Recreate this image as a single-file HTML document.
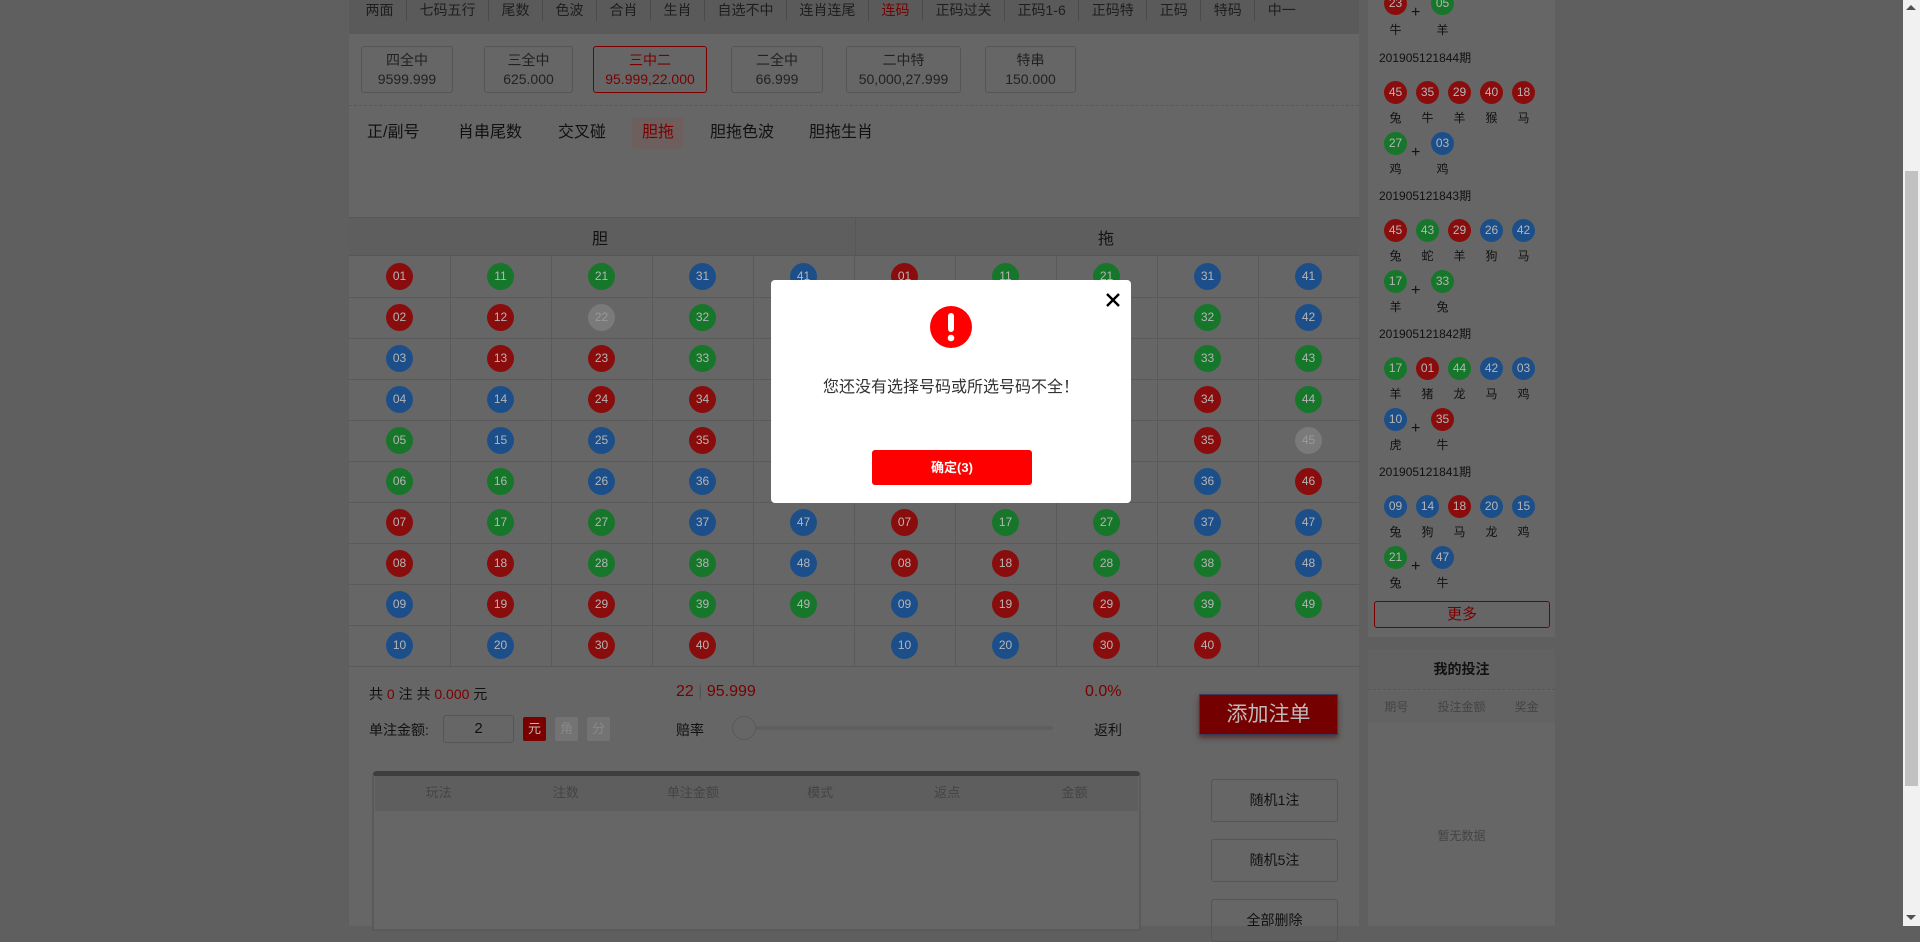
<!DOCTYPE html>
<html><head><meta charset="utf-8">
<style>
*{margin:0;padding:0;box-sizing:border-box}
body{width:1920px;height:926px;overflow:hidden;background:#5f5f5f;font-family:"Liberation Sans","Noto Sans CJK SC",sans-serif;color:#111;position:relative}
.a{position:absolute}
#main{left:349px;top:0;width:1010px;height:926px;background:#666}
#tabs{left:349px;top:0;width:1010px;height:34px;background:#5a5a5a;display:flex;padding-left:4px}
#tabs span{font-size:14px;line-height:22px;margin-top:-1px;padding:0 12.5px;border-right:1px solid #4a4a4a;color:#1e1e1e;height:22px}
.pb{border:1px solid #555;border-radius:3px;text-align:center;font-size:14px;line-height:19px;padding-top:4px;color:#222;top:46px;height:47px}
.sub{top:122px;font-size:16px;line-height:22px;color:#111}
.ball{position:absolute;width:27px;height:27px;border-radius:50%;color:#b5b5b5;font-size:12px;line-height:27px;text-align:center}
.r{background:#8a0d0d}.g{background:#16762a}.b{background:#1c4f8a}.x{background:#7a7a7a;color:#999}
.sb{position:absolute;width:23px;height:23px;border-radius:50%;color:#b5b5b5;font-size:12px;line-height:23px;text-align:center}
.z{position:absolute;font-size:12px;width:23px;text-align:center;color:#111}
.pl{position:absolute;font-size:16px;color:#111}
.tt{position:absolute;font-size:12px;color:#111;left:11px}
</style></head><body>
<div class="a" id="main"></div>
<div class="a" id="tabs"><span>两面</span><span>七码五行</span><span>尾数</span><span>色波</span><span>合肖</span><span>生肖</span><span>自选不中</span><span>连肖连尾</span><span style="color:#7a0000">连码</span><span>正码过关</span><span>正码1-6</span><span>正码特</span><span>正码</span><span>特码</span><span style="border:none">中一</span></div>

<div class="a pb" style="left:361px;width:92px">四全中<br>9599.999</div>
<div class="a pb" style="left:484px;width:89px">三全中<br>625.000</div>
<div class="a pb" style="left:593px;width:114px;border-color:#7a0000;color:#7a0000">三中二<br>95.999,22.000</div>
<div class="a pb" style="left:731px;width:92px">二全中<br>66.999</div>
<div class="a pb" style="left:846px;width:115px">二中特<br>50,000,27.999</div>
<div class="a pb" style="left:985px;width:91px">特串<br>150.000</div>
<div class="a" style="left:349px;top:105px;width:1010px;border-top:1px dashed #595959"></div>

<div class="a sub" style="left:367px">正/副号</div>
<div class="a sub" style="left:458px">肖串尾数</div>
<div class="a sub" style="left:558px">交叉碰</div>
<div class="a" style="left:632px;top:117px;width:51px;height:32px;background:#6e5f5f;border-radius:4px"></div>
<div class="a sub" style="left:642px;color:#7a0000">胆拖</div>
<div class="a sub" style="left:710px">胆拖色波</div>
<div class="a sub" style="left:809px">胆拖生肖</div>

<div class="a" style="left:349px;top:217px;width:1010px;height:39px;background:#5e5e5e;border-top:1px solid #575757;border-bottom:1px solid #575757"></div>
<div class="a" style="left:855px;top:217px;height:39px;border-left:1px solid #575757"></div>
<div class="a" style="left:592px;top:225px;font-size:16px">胆</div>
<div class="a" style="left:1098px;top:225px;font-size:16px">拖</div>

<svg class="a" style="left:349px;top:256px" width="1010" height="411">
<g stroke="#5a5a5a" stroke-width="1">
<line x1="0" y1="41.5" x2="1010" y2="41.5"/><line x1="0" y1="82.5" x2="1010" y2="82.5"/><line x1="0" y1="123.5" x2="1010" y2="123.5"/><line x1="0" y1="164.5" x2="1010" y2="164.5"/><line x1="0" y1="205.5" x2="1010" y2="205.5"/><line x1="0" y1="246.5" x2="1010" y2="246.5"/><line x1="0" y1="287.5" x2="1010" y2="287.5"/><line x1="0" y1="328.5" x2="1010" y2="328.5"/><line x1="0" y1="369.5" x2="1010" y2="369.5"/><line x1="0" y1="410.5" x2="1010" y2="410.5"/>
<line x1="101.5" y1="0" x2="101.5" y2="410"/><line x1="202.5" y1="0" x2="202.5" y2="410"/><line x1="303.5" y1="0" x2="303.5" y2="410"/><line x1="404.5" y1="0" x2="404.5" y2="410"/><line x1="505.5" y1="0" x2="505.5" y2="410"/><line x1="606.5" y1="0" x2="606.5" y2="410"/><line x1="707.5" y1="0" x2="707.5" y2="410"/><line x1="808.5" y1="0" x2="808.5" y2="410"/><line x1="909.5" y1="0" x2="909.5" y2="410"/>
</g></svg>

<div class="a" style="left:349px;top:256px;width:1010px;height:411px">
<div class="ball r" style="left:37px;top:7px">01</div><div class="ball g" style="left:138px;top:7px">11</div><div class="ball g" style="left:239px;top:7px">21</div><div class="ball b" style="left:340px;top:7px">31</div><div class="ball b" style="left:441px;top:7px">41</div><div class="ball r" style="left:542px;top:7px">01</div><div class="ball g" style="left:643px;top:7px">11</div><div class="ball g" style="left:744px;top:7px">21</div><div class="ball b" style="left:845px;top:7px">31</div><div class="ball b" style="left:946px;top:7px">41</div>
<div class="ball r" style="left:37px;top:48px">02</div><div class="ball r" style="left:138px;top:48px">12</div><div class="ball x" style="left:239px;top:48px">22</div><div class="ball g" style="left:340px;top:48px">32</div><div class="ball b" style="left:441px;top:48px">42</div><div class="ball r" style="left:542px;top:48px">02</div><div class="ball r" style="left:643px;top:48px">12</div><div class="ball g" style="left:744px;top:48px">22</div><div class="ball g" style="left:845px;top:48px">32</div><div class="ball b" style="left:946px;top:48px">42</div>
<div class="ball b" style="left:37px;top:89px">03</div><div class="ball r" style="left:138px;top:89px">13</div><div class="ball r" style="left:239px;top:89px">23</div><div class="ball g" style="left:340px;top:89px">33</div><div class="ball g" style="left:441px;top:89px">43</div><div class="ball b" style="left:542px;top:89px">03</div><div class="ball r" style="left:643px;top:89px">13</div><div class="ball r" style="left:744px;top:89px">23</div><div class="ball g" style="left:845px;top:89px">33</div><div class="ball g" style="left:946px;top:89px">43</div>
<div class="ball b" style="left:37px;top:130px">04</div><div class="ball b" style="left:138px;top:130px">14</div><div class="ball r" style="left:239px;top:130px">24</div><div class="ball r" style="left:340px;top:130px">34</div><div class="ball g" style="left:441px;top:130px">44</div><div class="ball b" style="left:542px;top:130px">04</div><div class="ball b" style="left:643px;top:130px">14</div><div class="ball r" style="left:744px;top:130px">24</div><div class="ball r" style="left:845px;top:130px">34</div><div class="ball g" style="left:946px;top:130px">44</div>
<div class="ball g" style="left:37px;top:171px">05</div><div class="ball b" style="left:138px;top:171px">15</div><div class="ball b" style="left:239px;top:171px">25</div><div class="ball r" style="left:340px;top:171px">35</div><div class="ball r" style="left:441px;top:171px">45</div><div class="ball g" style="left:542px;top:171px">05</div><div class="ball b" style="left:643px;top:171px">15</div><div class="ball b" style="left:744px;top:171px">25</div><div class="ball r" style="left:845px;top:171px">35</div><div class="ball x" style="left:946px;top:171px">45</div>
<div class="ball g" style="left:37px;top:212px">06</div><div class="ball g" style="left:138px;top:212px">16</div><div class="ball b" style="left:239px;top:212px">26</div><div class="ball b" style="left:340px;top:212px">36</div><div class="ball r" style="left:441px;top:212px">46</div><div class="ball g" style="left:542px;top:212px">06</div><div class="ball g" style="left:643px;top:212px">16</div><div class="ball b" style="left:744px;top:212px">26</div><div class="ball b" style="left:845px;top:212px">36</div><div class="ball r" style="left:946px;top:212px">46</div>
<div class="ball r" style="left:37px;top:253px">07</div><div class="ball g" style="left:138px;top:253px">17</div><div class="ball g" style="left:239px;top:253px">27</div><div class="ball b" style="left:340px;top:253px">37</div><div class="ball b" style="left:441px;top:253px">47</div><div class="ball r" style="left:542px;top:253px">07</div><div class="ball g" style="left:643px;top:253px">17</div><div class="ball g" style="left:744px;top:253px">27</div><div class="ball b" style="left:845px;top:253px">37</div><div class="ball b" style="left:946px;top:253px">47</div>
<div class="ball r" style="left:37px;top:294px">08</div><div class="ball r" style="left:138px;top:294px">18</div><div class="ball g" style="left:239px;top:294px">28</div><div class="ball g" style="left:340px;top:294px">38</div><div class="ball b" style="left:441px;top:294px">48</div><div class="ball r" style="left:542px;top:294px">08</div><div class="ball r" style="left:643px;top:294px">18</div><div class="ball g" style="left:744px;top:294px">28</div><div class="ball g" style="left:845px;top:294px">38</div><div class="ball b" style="left:946px;top:294px">48</div>
<div class="ball b" style="left:37px;top:335px">09</div><div class="ball r" style="left:138px;top:335px">19</div><div class="ball r" style="left:239px;top:335px">29</div><div class="ball g" style="left:340px;top:335px">39</div><div class="ball g" style="left:441px;top:335px">49</div><div class="ball b" style="left:542px;top:335px">09</div><div class="ball r" style="left:643px;top:335px">19</div><div class="ball r" style="left:744px;top:335px">29</div><div class="ball g" style="left:845px;top:335px">39</div><div class="ball g" style="left:946px;top:335px">49</div>
<div class="ball b" style="left:37px;top:376px">10</div><div class="ball b" style="left:138px;top:376px">20</div><div class="ball r" style="left:239px;top:376px">30</div><div class="ball r" style="left:340px;top:376px">40</div><div class="ball b" style="left:542px;top:376px">10</div><div class="ball b" style="left:643px;top:376px">20</div><div class="ball r" style="left:744px;top:376px">30</div><div class="ball r" style="left:845px;top:376px">40</div>
</div>

<div class="a" style="left:369px;top:684px;font-size:14px">共 <span style="color:#7a0000">0</span> 注 共 <span style="color:#7a0000">0.000</span> 元</div>
<div class="a" style="left:676px;top:683px;font-size:16px;color:#7a0000">22 <span style="color:#555">|</span> 95.999</div>
<div class="a" style="left:1085px;top:683px;font-size:16px;color:#7a0000">0.0%</div>
<div class="a" style="left:369px;top:720px;font-size:14px">单注金额:</div>
<div class="a" style="left:443px;top:715px;width:71px;height:28px;border:1px solid #555;border-radius:3px;text-align:center;line-height:26px;font-size:15px;background:#666">2</div>
<div class="a" style="left:523px;top:717px;width:23px;height:24px;background:#7a0000;color:#bbb;font-size:13px;text-align:center;line-height:24px;border-radius:2px">元</div>
<div class="a" style="left:555px;top:717px;width:23px;height:24px;background:#737373;color:#888;font-size:13px;text-align:center;line-height:24px;border-radius:2px">角</div>
<div class="a" style="left:587px;top:717px;width:23px;height:24px;background:#737373;color:#888;font-size:13px;text-align:center;line-height:24px;border-radius:2px">分</div>
<div class="a" style="left:676px;top:720px;font-size:14px">赔率</div>
<div class="a" style="left:745px;top:726px;width:308px;height:4px;background:#5e5e5e;border-radius:2px"></div>
<div class="a" style="left:732px;top:716px;width:24px;height:24px;background:#666;border:1px solid #5a5a5a;border-radius:50%"></div>
<div class="a" style="left:1094px;top:720px;font-size:14px">返利</div>
<div class="a" style="left:1199px;top:694px;width:139px;height:41px;background:#750000;border:1px solid #3a3a5a;box-shadow:0 3px 5px #533;color:#bbb;font-size:21px;text-align:center;line-height:39px">添加注单</div>

<div class="a" style="left:372px;top:771px;width:769px;height:160px;border:2px solid #5a5a5a;border-top:5px solid #3e3e3e;border-radius:5px 5px 0 0;background:#666"></div>
<div class="a" style="left:375px;top:776px;width:763px;height:35px;background:#5e5e5e;display:flex;font-size:13px;color:#444;line-height:33px">
<span style="flex:1;text-align:center">玩法</span><span style="flex:1;text-align:center">注数</span><span style="flex:1;text-align:center">单注金额</span><span style="flex:1;text-align:center">模式</span><span style="flex:1;text-align:center">返点</span><span style="flex:1;text-align:center">金额</span></div>
<div class="a" style="left:1211px;top:779px;width:127px;height:43px;border:1px solid #555;border-radius:3px;text-align:center;line-height:41px;font-size:14px">随机1注</div>
<div class="a" style="left:1211px;top:839px;width:127px;height:43px;border:1px solid #555;border-radius:3px;text-align:center;line-height:41px;font-size:14px">随机5注</div>
<div class="a" style="left:1211px;top:899px;width:127px;height:43px;border:1px solid #555;border-radius:3px;text-align:center;line-height:41px;font-size:14px">全部删除</div>

<div class="a" style="left:1368px;top:0;width:187px;height:637px;background:#666;overflow:hidden">
<div class="a" style="top:-80px;left:0;width:187px;height:140px">
 <div class="sb r" style="left:16px;top:72px">23</div><div class="pl" style="left:43px;top:84px">+</div><div class="sb g" style="left:63px;top:72px">05</div>
 <div class="z" style="left:16px;top:101px">牛</div><div class="z" style="left:63px;top:101px">羊</div>
</div>
<div class="a" style="top:49px;left:0;width:187px;height:138px">
 <div class="tt" style="top:0">201905121844期</div>
 <div class="sb r" style="left:16px;top:32px">45</div><div class="sb r" style="left:48px;top:32px">35</div><div class="sb r" style="left:80px;top:32px">29</div><div class="sb r" style="left:112px;top:32px">40</div><div class="sb r" style="left:144px;top:32px">18</div>
 <div class="z" style="left:16px;top:60px">兔</div><div class="z" style="left:48px;top:60px">牛</div><div class="z" style="left:80px;top:60px">羊</div><div class="z" style="left:112px;top:60px">猴</div><div class="z" style="left:144px;top:60px">马</div>
 <div class="sb g" style="left:16px;top:83px">27</div><div class="pl" style="left:43px;top:95px">+</div><div class="sb b" style="left:63px;top:83px">03</div>
 <div class="z" style="left:16px;top:111px">鸡</div><div class="z" style="left:63px;top:111px">鸡</div>
</div>
<div class="a" style="top:187px;left:0;width:187px;height:138px">
 <div class="tt" style="top:0">201905121843期</div>
 <div class="sb r" style="left:16px;top:32px">45</div><div class="sb g" style="left:48px;top:32px">43</div><div class="sb r" style="left:80px;top:32px">29</div><div class="sb b" style="left:112px;top:32px">26</div><div class="sb b" style="left:144px;top:32px">42</div>
 <div class="z" style="left:16px;top:60px">兔</div><div class="z" style="left:48px;top:60px">蛇</div><div class="z" style="left:80px;top:60px">羊</div><div class="z" style="left:112px;top:60px">狗</div><div class="z" style="left:144px;top:60px">马</div>
 <div class="sb g" style="left:16px;top:83px">17</div><div class="pl" style="left:43px;top:95px">+</div><div class="sb g" style="left:63px;top:83px">33</div>
 <div class="z" style="left:16px;top:111px">羊</div><div class="z" style="left:63px;top:111px">兔</div>
</div>
<div class="a" style="top:325px;left:0;width:187px;height:138px">
 <div class="tt" style="top:0">201905121842期</div>
 <div class="sb g" style="left:16px;top:32px">17</div><div class="sb r" style="left:48px;top:32px">01</div><div class="sb g" style="left:80px;top:32px">44</div><div class="sb b" style="left:112px;top:32px">42</div><div class="sb b" style="left:144px;top:32px">03</div>
 <div class="z" style="left:16px;top:60px">羊</div><div class="z" style="left:48px;top:60px">猪</div><div class="z" style="left:80px;top:60px">龙</div><div class="z" style="left:112px;top:60px">马</div><div class="z" style="left:144px;top:60px">鸡</div>
 <div class="sb b" style="left:16px;top:83px">10</div><div class="pl" style="left:43px;top:95px">+</div><div class="sb r" style="left:63px;top:83px">35</div>
 <div class="z" style="left:16px;top:111px">虎</div><div class="z" style="left:63px;top:111px">牛</div>
</div>
<div class="a" style="top:463px;left:0;width:187px;height:138px">
 <div class="tt" style="top:0">201905121841期</div>
 <div class="sb b" style="left:16px;top:32px">09</div><div class="sb b" style="left:48px;top:32px">14</div><div class="sb r" style="left:80px;top:32px">18</div><div class="sb b" style="left:112px;top:32px">20</div><div class="sb b" style="left:144px;top:32px">15</div>
 <div class="z" style="left:16px;top:60px">兔</div><div class="z" style="left:48px;top:60px">狗</div><div class="z" style="left:80px;top:60px">马</div><div class="z" style="left:112px;top:60px">龙</div><div class="z" style="left:144px;top:60px">鸡</div>
 <div class="sb g" style="left:16px;top:83px">21</div><div class="pl" style="left:43px;top:95px">+</div><div class="sb b" style="left:63px;top:83px">47</div>
 <div class="z" style="left:16px;top:111px">兔</div><div class="z" style="left:63px;top:111px">牛</div>
</div>
<div class="a" style="left:6px;top:601px;width:176px;height:27px;border:1px solid #7a0000;border-radius:3px;color:#7a0000;text-align:center;line-height:25px;font-size:15px">更多</div>
</div>

<div class="a" style="left:1368px;top:649px;width:187px;height:277px;background:#666">
 <div class="a" style="left:0;top:0;width:187px;height:41px;background:#626262;border-bottom:1px dashed #575757;text-align:center;line-height:40px;font-size:14px;font-weight:bold">我的投注</div>
 <div class="a" style="left:0;top:42px;width:187px;height:32px;background:#636363;display:flex;font-size:12px;color:#444;line-height:32px"><span style="flex:1;text-align:center">期号</span><span style="flex:1.3;text-align:center">投注金额</span><span style="flex:1;text-align:center">奖金</span></div>
 <div class="a" style="left:0;top:178px;width:187px;text-align:center;font-size:12px;color:#444">暂无数据</div>
</div>

<div class="a" style="left:1903px;top:0;width:17px;height:926px;background:#f1f1f1"></div>
<div class="a" style="left:1905px;top:171px;width:13px;height:615px;background:#c1c1c1"></div>
<div class="a" style="left:1906px;top:5px;width:0;height:0;border-left:5px solid transparent;border-right:5px solid transparent;border-bottom:5px solid #505050"></div>
<div class="a" style="left:1906px;top:915px;width:0;height:0;border-left:5px solid transparent;border-right:5px solid transparent;border-top:5px solid #505050"></div>

<div class="a" style="left:771px;top:280px;width:360px;height:223px;background:#fff;border-radius:4px">
 <svg class="a" style="left:334px;top:12px" width="16" height="16" viewBox="0 0 16 16"><path d="M2 2L14 14M14 2L2 14" stroke="#000" stroke-width="2.4"/></svg>
 <svg class="a" style="left:159px;top:26px" width="42" height="42" viewBox="0 0 42 42"><circle cx="21" cy="21" r="21" fill="#f00"/><rect x="18" y="7" width="6" height="19" rx="3" fill="#fff"/><circle cx="21" cy="32" r="3.3" fill="#fff"/></svg>
 <div class="a" style="left:0;top:93px;width:360px;text-align:center;font-size:16px;color:#333">您还没有选择号码或所选号码不全！</div>
 <div class="a" style="left:101px;top:170px;width:160px;height:35px;background:#f00;border-radius:3px;color:#fff;font-size:13px;font-weight:bold;text-align:center;line-height:35px">确定(3)</div>
</div>
</body></html>
